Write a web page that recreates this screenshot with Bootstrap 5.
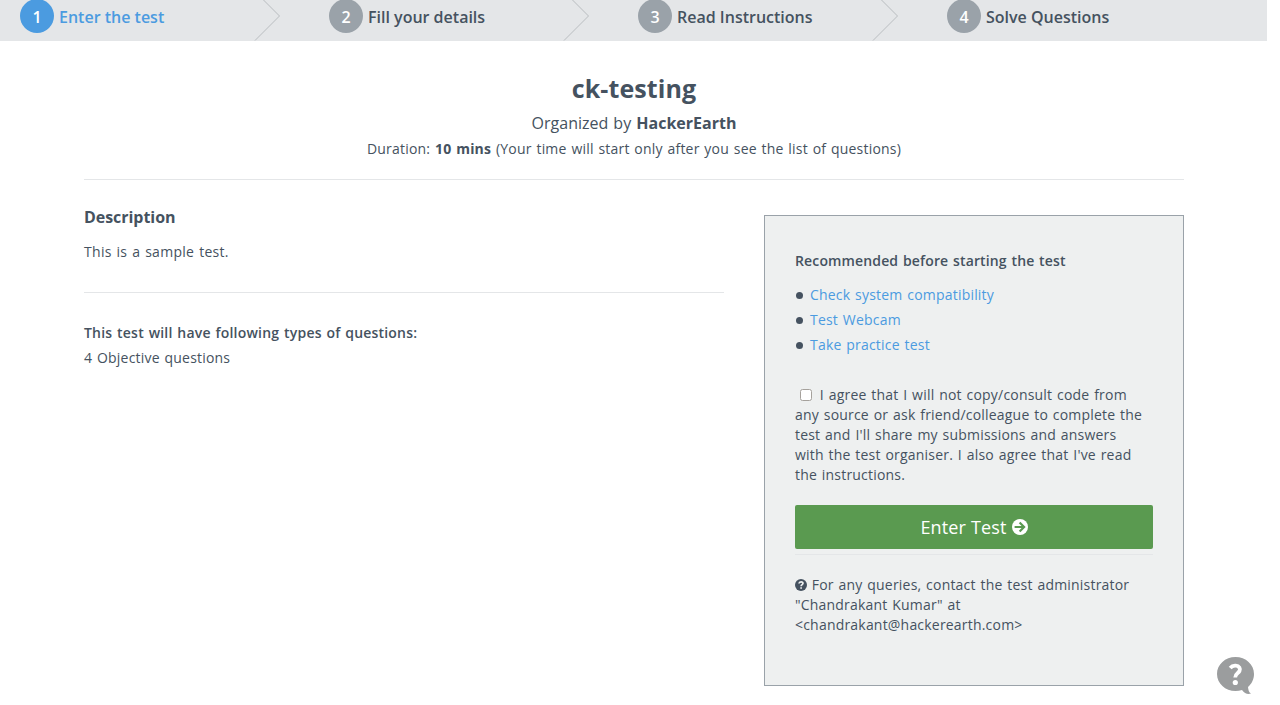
<!DOCTYPE html>
<html lang="en">
<head>
<meta charset="utf-8">
<title>ck-testing</title>
<meta name="viewport" content="width=device-width, initial-scale=1">
<link href="https://cdn.jsdelivr.net/npm/bootstrap@5.3.0/dist/css/bootstrap.min.css" rel="stylesheet">
<style>
body{font-family:"Open Sans",sans-serif;font-size:14px;line-height:20px;letter-spacing:.2px;word-spacing:.95px;color:#455260;height:705px;overflow:hidden}
.page{width:1267px}
.steps{height:41px;background:#e4e6e8}
.step{width:309px;height:41px;padding-left:20px;font-size:16px;font-weight:600;letter-spacing:0;word-spacing:0}
.step-no{width:34px;height:34px;margin-top:-1px;background:#9aa2a9;color:#fff;padding-top:1px}
.step-title{line-height:34px;margin-left:5px}
.step.current .step-title,.test-link{color:#4b9be0}
.step.current .step-no{background:#4b9be0}
.chevron{margin-right:28px}
.content{width:1100px;margin-left:84px}
.rule{height:1px;background:#e4e6e8}
h1{font-size:25px;font-weight:700;line-height:34px;margin:30px 0 7px;letter-spacing:.12px}
.organizer{font-size:16px;line-height:22px;letter-spacing:0}
.duration{margin-top:5px;margin-bottom:20px}
.left-pane{width:640px}
h2{font-size:16px;font-weight:700;line-height:22px;letter-spacing:-.05px;margin:26px 0 14px}
.summary{letter-spacing:.29px}
.panel{width:420px;height:471px;margin-top:35px;padding:35px 30px;background:#eef0f0;border:1px solid #9aa2a9}
.semi{font-weight:600}
.panel .semi{letter-spacing:.14px}
.question-count{margin-top:5px}
.checks{line-height:25px;margin-top:11px}
.dot{width:7px;height:7px;background:#455260;margin:1px 7px 0 1px}
.test-link{text-decoration:none}
.agree{margin-top:28px;padding-right:8px}
.agree input{appearance:none;width:12px;height:12px;margin:0 3px 0 5px;vertical-align:-1px;background:#fff;border:1px solid #a5a19c;border-radius:2.500px}
.agree input:checked{background:#4b9be0}
.enter{height:44px;margin-top:20px;background:#5a9a50;color:#fff;font-size:18px;letter-spacing:.15px;border:0;border-radius:2px}
.enter:hover{background:#4f8a46;color:#fff}
.help{right:26px;bottom:10px}
</style>
</head>
<body>
<div class="page">
  <header class="steps d-flex">
    <div class="step current d-flex flex-shrink-0">
      <span class="step-no rounded-circle d-flex align-items-center justify-content-center">1</span><span class="step-title">Enter the test</span>
      <svg class="chevron ms-auto" width="27" height="41" fill="none" stroke="#b9bdc0"><path d="M9-.5 25.500 16 1 40.500"/></svg>
    </div>
    <div class="step d-flex flex-shrink-0">
      <span class="step-no rounded-circle d-flex align-items-center justify-content-center">2</span><span class="step-title">Fill your details</span>
      <svg class="chevron ms-auto" width="27" height="41" fill="none" stroke="#b9bdc0"><path d="M9-.5 25.500 16 1 40.500"/></svg>
    </div>
    <div class="step d-flex flex-shrink-0">
      <span class="step-no rounded-circle d-flex align-items-center justify-content-center">3</span><span class="step-title">Read Instructions</span>
      <svg class="chevron ms-auto" width="27" height="41" fill="none" stroke="#b9bdc0"><path d="M9-.5 25.500 16 1 40.500"/></svg>
    </div>
    <div class="step d-flex flex-shrink-0">
      <span class="step-no rounded-circle d-flex align-items-center justify-content-center">4</span><span class="step-title">Solve Questions</span>
    </div>
  </header>
  <main class="content">
    <div class="text-center">
      <h1>ck-testing</h1>
      <div class="organizer">Organized by <b>HackerEarth</b></div>
      <div class="duration">Duration: <b>10 mins</b> (Your time will start only after you see the list of questions)</div>
    </div>
    <div class="rule"></div>
    <div class="d-flex justify-content-between">
      <section class="left-pane">
        <h2>Description</h2>
        <p class="summary mb-0">This is a sample test.</p>
        <div class="rule" style="margin:30px 0"></div>
        <div class="semi">This test will have following types of questions:</div>
        <div class="question-count">4 Objective questions</div>
      </section>
      <aside class="panel">
        <div class="semi">Recommended before starting the test</div>
        <ul class="checks list-unstyled mb-0">
          <li class="d-flex align-items-center"><span class="dot rounded-circle"></span><a class="test-link" href="#">Check system compatibility</a></li>
          <li class="d-flex align-items-center"><span class="dot rounded-circle"></span><a class="test-link" href="#">Test Webcam</a></li>
          <li class="d-flex align-items-center"><span class="dot rounded-circle"></span><a class="test-link" href="#">Take practice test</a></li>
        </ul>
        <label class="agree d-block"><input type="checkbox"> I agree that I will not copy/consult code from any source or ask friend/colleague to complete the test and I'll share my submissions and answers with the test organiser. I also agree that I've read the instructions.</label>
        <button class="btn enter w-100 d-flex align-items-center justify-content-center p-0" type="button">Enter Test
          <svg width="16" height="16" viewBox="0 0 16 16" style="margin-left:5px"><circle cx="8" cy="8" r="8" fill="#fff"/><path d="M2.600 8h9M7.600 3.500 12.100 8 7.600 12.500" fill="none" stroke="#5a9a50" stroke-width="2.200"/></svg>
        </button>
        <div class="rule" style="margin:5px 0 20px"></div>
        <div><svg width="12" height="12" viewBox="0 0 12 12" style="vertical-align:-1px"><circle cx="6" cy="6" r="6" fill="#455260"/><path d="M4 4.500C4.200 2.300 8 2.300 8 4.300 8 5.700 6.100 5.500 6.100 7.200M6.100 8.200v1.600" fill="none" stroke="#eef0f0" stroke-width="1.700"/></svg> For any queries, contact the test administrator "Chandrakant Kumar" at &lt;chandrakant@hackerearth.com&gt;</div>
      </aside>
    </div>
  </main>
</div>
<a class="help position-fixed" href="#" aria-label="Help">
  <svg class="d-block" width="37" height="38" viewBox="0 0 37 38"><path d="M18.500 0C28.700 0 37 7.500 37 17c0 5.300-2.300 9.800-6 13 .3 3 .8 5.300 3 6.500-3.500 1.300-6.500-.3-9-3.500-2 .7-4.200 1-6.500 1C8.300 34 0 26.500 0 17S8.300 0 18.500 0Z" fill="#9b9d9e"/><path d="M13.200 11C14.700 9.200 16.700 8.500 18.700 8.700c3.600.3 5 3 3.800 5.300-1.100 2.200-4.300 2.400-4.300 6.500" fill="none" stroke="#fff" stroke-width="3.800"/><circle cx="18.300" cy="25.500" r="2.600" fill="#fff"/></svg>
</a>
<script src="https://cdn.jsdelivr.net/npm/bootstrap@5.3.0/dist/js/bootstrap.bundle.min.js"></script>
</body>
</html>
